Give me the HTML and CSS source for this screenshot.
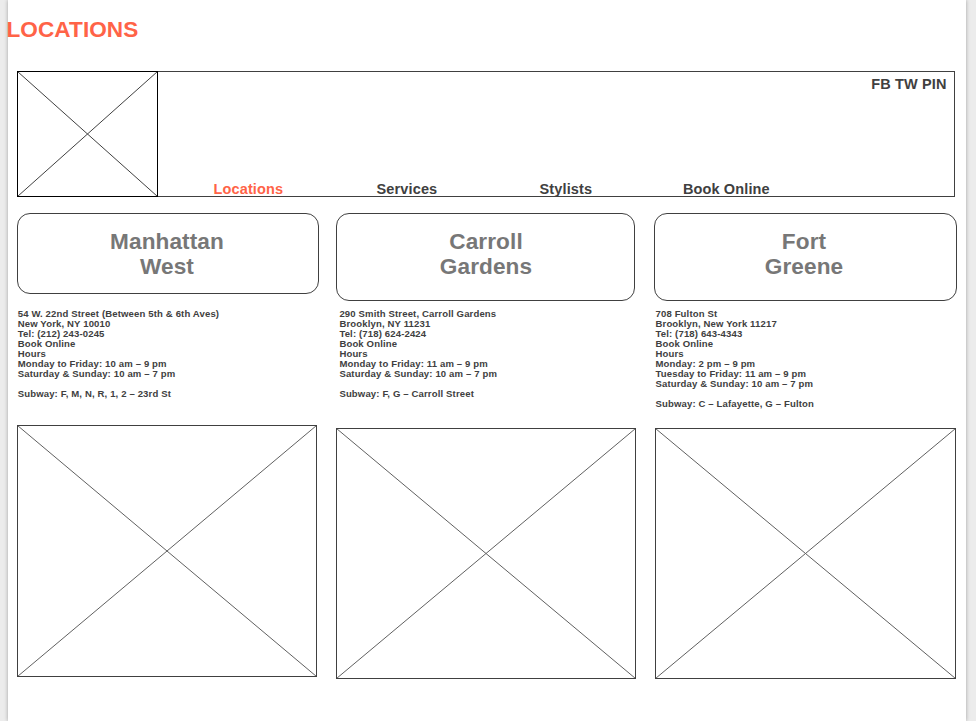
FILE: index.html
```html
<!DOCTYPE html>
<html lang="en">
<head>
<meta charset="utf-8">
<title>Locations</title>
<link rel="stylesheet" href="styles.css">
</head>
<body>
<div class="page">
  <h1 class="title">LOCATIONS</h1>
  <header class="header">
    <svg class="logo" viewBox="0 0 141 126"><path class="cross" d="M.5 .5L140.500 125.500M140.500 .5L.5 125.500"/><rect x=".5" y=".5" width="140" height="125"/></svg>
    <div class="header-main">
      <div class="social">FB TW PIN</div>
      <nav class="nav">
        <a class="active">Locations</a><a>Services</a><a>Stylists</a><a>Book Online</a>
      </nav>
    </div>
  </header>
  <main class="columns">
    <section class="col manhattan">
      <h2 class="card">Manhattan<br>West</h2>
      <p class="info">54 W. 22nd Street (Between 5th &amp; 6th Aves)<br>New York, NY 10010<br>Tel: (212) 243-0245<br>Book Online<br>Hours<br>Monday to Friday: 10 am – 9 pm<br>Saturday &amp; Sunday: 10 am – 7 pm<br><br>Subway: F, M, N, R, 1, 2 – 23rd St</p>
      <svg class="photo" width="300" height="252"><path class="cross" d="M.5 .5L299.500 251.500M299.500 .5L.5 251.500"/><rect x=".5" y=".5" width="299" height="251"/></svg>
    </section>
    <section class="col carroll">
      <h2 class="card">Carroll<br>Gardens</h2>
      <p class="info">290 Smith Street, Carroll Gardens<br>Brooklyn, NY 11231<br>Tel: (718) 624-2424<br>Book Online<br>Hours<br>Monday to Friday: 11 am – 9 pm<br>Saturday &amp; Sunday: 10 am – 7 pm<br><br>Subway: F, G – Carroll Street</p>
      <svg class="photo" width="300" height="251"><path class="cross" d="M.5 .5L299.500 250.500M299.500 .5L.5 250.500"/><rect x=".5" y=".5" width="299" height="250"/></svg>
    </section>
    <section class="col greene">
      <h2 class="card">Fort<br>Greene</h2>
      <p class="info">708 Fulton St<br>Brooklyn, New York 11217<br>Tel: (718) 643-4343<br>Book Online<br>Hours<br>Monday: 2 pm – 9 pm<br>Tuesday to Friday: 11 am – 9 pm<br>Saturday &amp; Sunday: 10 am – 7 pm<br><br>Subway: C – Lafayette, G – Fulton</p>
      <svg class="photo" width="301" height="251"><path class="cross" d="M.5 .5L300.500 250.500M300.500 .5L.5 250.500"/><rect x=".5" y=".5" width="300" height="250"/></svg>
    </section>
  </main>
</div>
</body>
</html>
```
FILE: styles.css
```css
* { box-sizing: border-box; }
body {
  margin: 0;
  background: #ececec;
  font-family: "Liberation Sans", Arial, sans-serif;
  font-weight: bold;
  letter-spacing: 0.14px;
  color: #404040;
  overflow: hidden;
}
.page {
  width: 958px;
  height: 721px;
  margin-left: 8px;
  padding-left: 9px;
  background: #fff;
  box-shadow: 0 0 4px rgba(0, 0, 0, 0.32);
}
.title {
  margin: 0 0 0 -10.5px;
  padding-top: 17px;
  height: 71px;
  font-size: 22.6px;
  line-height: 25px;
  letter-spacing: 0.05px;
  color: #ff6347;
}
.header {
  display: flex;
  width: 938px;
  height: 126px;
}
svg { display: block; fill: none; stroke: #404040; }
.cross { stroke: #606060; }
.logo { width: 141px; height: 126px; stroke: #000; }
.logo .cross { stroke: #404040; }
.header-main {
  flex: 1;
  display: flex;
  flex-direction: column;
  justify-content: space-between;
  border: 1px solid #404040;
  border-left: 0;
  font-size: 14.5px;
  line-height: 16px;
}
.social { padding: 4px 7.4px 0 0; text-align: right; }
.nav {
  display: grid;
  grid-template-columns: 163px 163px 143.4px 1fr;
  padding-left: 55.5px;
  height: 15px;
}
.active { color: #ff6347; }
.columns { display: flex; margin-top: 16px; }
.col { flex: none; display: flex; flex-direction: column; }
.manhattan { width: 319px; }
.carroll { width: 318px; }
.greene { width: 303px; }
.card {
  margin: 0;
  padding: 15px 0 0;
  height: 88px;
  border: 1px solid #404040;
  border-radius: 13px;
  font-size: 22.6px;
  line-height: 25px;
  letter-spacing: 0.1px;
  text-align: center;
  color: #777;
}
.manhattan .card { width: 302px; height: 81px; padding-right: 2px; }
.carroll .card { width: 299px; padding-left: 1px; }
.greene .card { width: 303px; padding-right: 3px; }
.info {
  margin: 8px 0 0 3.4px;
  height: 119px;
  font-size: 9.55px;
  line-height: 10px;
  white-space: nowrap;
}
.manhattan .info { margin: 15px 0 0 0.7px; height: 116px; }
.greene .info { margin-left: 1.5px; }
.greene .photo { margin-left: 1px; }
```
